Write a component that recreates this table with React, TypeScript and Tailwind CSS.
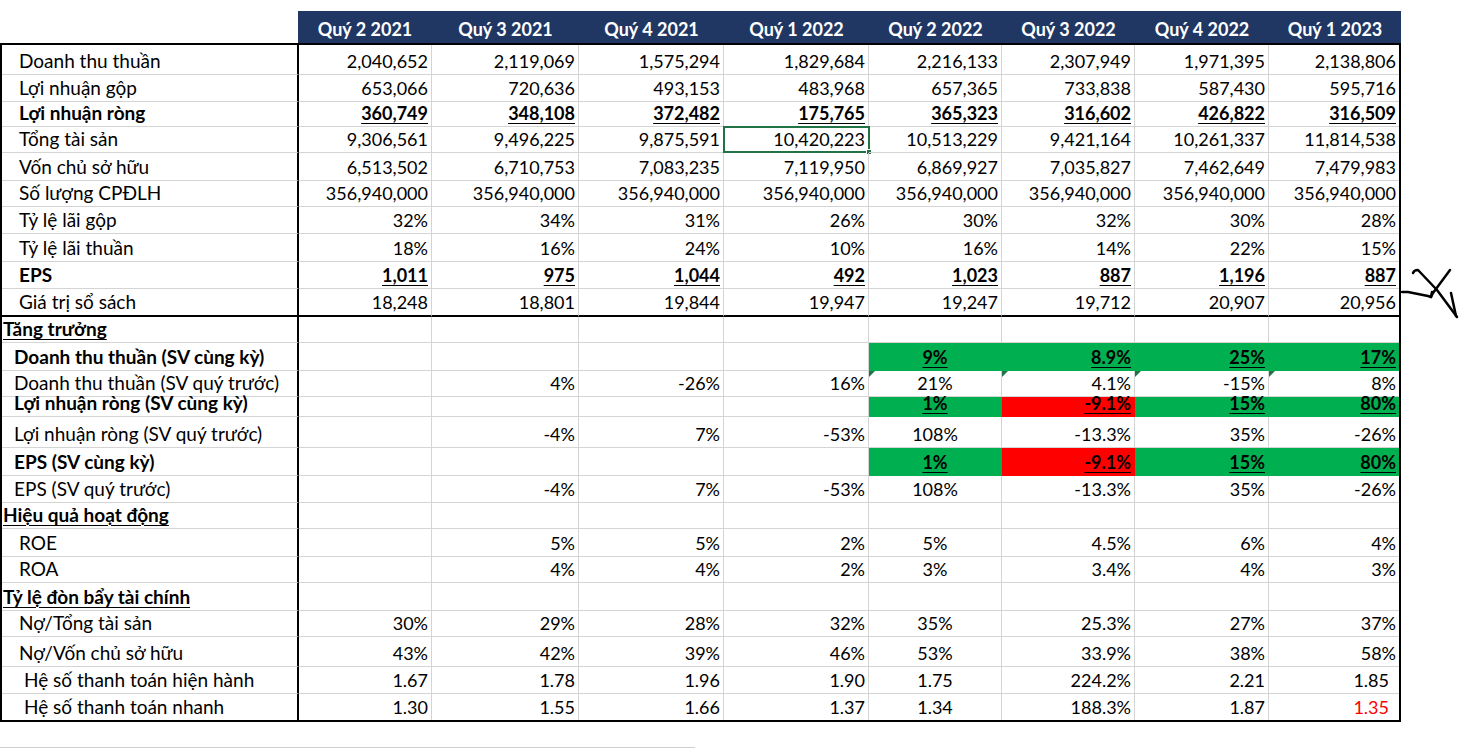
import React from 'react';

type Val = string | null | { v: string; cls: string };
type Row = {
  label: string;
  pad: string;
  h: string;
  bold?: boolean;
  section?: boolean;
  ul?: boolean;
  tight?: boolean;
  vals?: Val[];
  fills?: (string | null)[];
  marks?: boolean;
  edge?: 'thick' | 'last';
};

const quarters = ['Quý 2 2021', 'Quý 3 2021', 'Quý 4 2021', 'Quý 1 2022', 'Quý 2 2022', 'Quý 3 2022', 'Quý 4 2022', 'Quý 1 2023'];
const colW = ['w-[133px]', 'w-[147px]', 'w-[145px]', 'w-[145px]', 'w-[133px]', 'w-[133px]', 'w-[134px]', 'w-[130px]'];
const headW = ['w-[134px]', 'w-[147px]', 'w-[145px]', 'w-[145px]', 'w-[133px]', 'w-[133px]', 'w-[134px]', 'w-[132px]'];

const growthFill = [null, null, null, null, 'g', 'g', 'g', 'g'];
const lossFill = [null, null, null, null, 'g', 'r', 'g', 'g'];

const rows: Row[] = [
  { label: 'Doanh thu thuần', pad: 'pl-[17px]', h: 'h-[30px]', vals: ['2,040,652', '2,119,069', '1,575,294', '1,829,684', '2,216,133', '2,307,949', '1,971,395', '2,138,806'] },
  { label: 'Lợi nhuận gộp', pad: 'pl-[17px]', h: 'h-[27px]', vals: ['653,066', '720,636', '493,153', '483,968', '657,365', '733,838', '587,430', '595,716'] },
  { label: 'Lợi nhuận ròng', pad: 'pl-[17px]', h: 'h-[25px]', bold: true, ul: true, vals: ['360,749', '348,108', '372,482', '175,765', '365,323', '316,602', '426,822', '316,509'] },
  { label: 'Tổng tài sản', pad: 'pl-[17px]', h: 'h-[26px]', vals: ['9,306,561', '9,496,225', '9,875,591', '10,420,223', '10,513,229', '9,421,164', '10,261,337', '11,814,538'] },
  { label: 'Vốn chủ sở hữu', pad: 'pl-[17px]', h: 'h-[28px]', vals: ['6,513,502', '6,710,753', '7,083,235', '7,119,950', '6,869,927', '7,035,827', '7,462,649', '7,479,983'] },
  { label: 'Số lượng CPĐLH', pad: 'pl-[17px]', h: 'h-[26px]', vals: Array(8).fill('356,940,000') },
  { label: 'Tỷ lệ lãi gộp', pad: 'pl-[17px]', h: 'h-[27px]', vals: ['32%', '34%', '31%', '26%', '30%', '32%', '30%', '28%'] },
  { label: 'Tỷ lệ lãi thuần', pad: 'pl-[17px]', h: 'h-[28px]', vals: ['18%', '16%', '24%', '10%', '16%', '14%', '22%', '15%'] },
  { label: 'EPS', pad: 'pl-[17px]', h: 'h-[27px]', bold: true, ul: true, vals: ['1,011', '975', '1,044', '492', '1,023', '887', '1,196', '887'] },
  { label: 'Giá trị sổ sách', pad: 'pl-[17px]', h: 'h-[28px]', edge: 'thick', vals: ['18,248', '18,801', '19,844', '19,947', '19,247', '19,712', '20,907', '20,956'] },
  { label: 'Tăng trưởng', pad: 'pl-[1px]', h: 'h-[26px]', section: true },
  { label: 'Doanh thu thuần (SV cùng kỳ)', pad: 'pl-[12px]', h: 'h-[28px]', bold: true, ul: true, fills: growthFill, vals: [null, null, null, null, '9%', '8.9%', '25%', '17%'] },
  { label: 'Doanh thu thuần (SV quý trước)', pad: 'pl-[12px]', h: 'h-[26px]', marks: true, vals: [null, '4%', '-26%', '16%', '21%', '4.1%', '-15%', '8%'] },
  { label: 'Lợi nhuận ròng (SV cùng kỳ)', pad: 'pl-[12px]', h: 'h-[20px]', bold: true, ul: true, tight: true, fills: lossFill, vals: [null, null, null, null, '1%', '-9.1%', '15%', '80%'] },
  { label: 'Lợi nhuận ròng (SV quý trước)', pad: 'pl-[12px]', h: 'h-[31px]', vals: [null, '-4%', '7%', '-53%', '108%', '-13.3%', '35%', '-26%'] },
  { label: 'EPS (SV cùng kỳ)', pad: 'pl-[12px]', h: 'h-[28px]', bold: true, ul: true, fills: lossFill, vals: [null, null, null, null, '1%', '-9.1%', '15%', '80%'] },
  { label: 'EPS (SV quý trước)', pad: 'pl-[12px]', h: 'h-[27px]', vals: [null, '-4%', '7%', '-53%', '108%', '-13.3%', '35%', '-26%'] },
  { label: 'Hiệu quả hoạt động', pad: 'pl-[1px]', h: 'h-[26px]', section: true },
  { label: 'ROE', pad: 'pl-[17px]', h: 'h-[28px]', vals: [null, '5%', '5%', '2%', '5%', '4.5%', '6%', '4%'] },
  { label: 'ROA', pad: 'pl-[17px]', h: 'h-[26px]', vals: [null, '4%', '4%', '2%', '3%', '3.4%', '4%', '3%'] },
  { label: 'Tỷ lệ đòn bẩy tài chính', pad: 'pl-[1px]', h: 'h-[28px]', section: true },
  { label: 'Nợ/Tổng tài sản', pad: 'pl-[17px]', h: 'h-[26px]', vals: ['30%', '29%', '28%', '32%', '35%', '25.3%', '27%', '37%'] },
  { label: 'Nợ/Vốn chủ sở hữu', pad: 'pl-[17px]', h: 'h-[30px]', vals: ['43%', '42%', '39%', '46%', '53%', '33.9%', '38%', '58%'] },
  { label: 'Hệ số thanh toán hiện hành', pad: 'pl-[22px]', h: 'h-[27px]', vals: ['1.67', '1.78', '1.96', '1.90', '1.75', '224.2%', '2.21', { v: '1.85', cls: 'pr-[10px]' }] },
  { label: 'Hệ số thanh toán nhanh', pad: 'pl-[22px]', h: 'h-[26px]', edge: 'last', vals: ['1.30', '1.55', '1.66', '1.37', '1.34', '188.3%', '1.87', { v: '1.35', cls: 'pr-[10px] text-[#ff0000]' }] },
];

const bottomBorder = (edge: Row['edge'], fill: string | null | undefined) => {
  if (edge === 'last') return '';
  if (edge === 'thick') return 'border-b-2 border-b-black';
  if (fill === 'g') return 'border-b border-b-[#00b050]';
  if (fill === 'r') return 'border-b border-b-[#ff0000]';
  return 'border-b border-b-[#d4d4d4]';
};

const rightBorder = (i: number, fill: string | null | undefined) => {
  if (i === 7) return '';
  if (fill === 'g') return 'border-r border-r-[#00b050]';
  if (fill === 'r') return 'border-r border-r-[#ff0000]';
  return 'border-r border-r-[#d4d4d4]';
};

const SheetRow = ({ row, idx }: { row: Row; idx: number }) => {
  const growth = idx >= 10;
  // short rows keep the same baseline with a tighter line box
  const fit = row.tight ? 'leading-[12px] pb-[7px]' : 'pb-[2px]';
  return (
    <div className={`flex ${row.h}`}>
      <div className={`w-[297px] shrink-0 flex items-end text-[19px] border-r-2 border-r-black whitespace-nowrap ${fit} ${row.pad} ${bottomBorder(row.edge, null)}`}>
        <span className={`${row.bold || row.section ? 'font-bold' : ''} ${row.section ? 'underline decoration-1 underline-offset-[3px]' : ''}`}>
          {row.label}
        </span>
      </div>
      {colW.map((w, i) => {
        const fill = row.fills?.[i];
        const raw = row.vals?.[i] ?? null;
        const text = raw && typeof raw === 'object' ? raw.v : raw;
        const extra = raw && typeof raw === 'object' ? raw.cls : '';
        const align = growth && i === 4 ? 'justify-center' : 'justify-end';
        const bg = fill === 'g' ? 'bg-[#00b050]' : fill === 'r' ? 'bg-[#ff0000]' : '';
        const selected = idx === 3 && i === 3;
        return (
          <div
            key={i}
            className={`${w} shrink-0 relative flex items-end px-[3px] whitespace-nowrap ${fit} ${align} ${bg} ${rightBorder(i, fill)} ${bottomBorder(row.edge, fill)} ${extra}`}
          >
            {row.marks && i >= 4 && (
              <div className="absolute left-0 top-0 w-0 h-0 border-t-[6px] border-r-[6px] border-t-[#217346] border-r-transparent" />
            )}
            {text && (
              <span className={row.ul ? 'font-bold underline decoration-1 underline-offset-[3px]' : ''}>{text}</span>
            )}
            {selected && (
              <>
                <div className="absolute -left-[1px] -top-[1px] -right-[2px] -bottom-[1px] border-2 border-[#217346]" />
                <div className="absolute -right-[4px] -bottom-[3px] w-[6px] h-[6px] bg-[#217346] border border-white" />
              </>
            )}
          </div>
        );
      })}
    </div>
  );
};

export default function App() {
  return (
    <div className="relative w-[1460px] h-[748px] overflow-hidden bg-white text-black font-[Lato,sans-serif] text-[18px] leading-[22px]">
      {/* Header band */}
      <div className="flex mt-[11px] h-[32px]">
        <div className="w-[298px] shrink-0" />
        <div className="flex bg-[#203764]">
          {quarters.map((q, i) => (
            <div key={q} className={`${headW[i]} flex items-center justify-center pt-[3px] text-white font-bold`}>
              {q}
            </div>
          ))}
        </div>
      </div>

      {/* Sheet body */}
      <div className="w-[1401px] border-2 border-black">
        {rows.map((r, i) => (
          <SheetRow key={r.label + i} row={r} idx={i} />
        ))}
      </div>

      <div className="mt-[25px] h-px w-[695px] bg-[#cfcfcf]" />

      {/* hand-drawn mark */}
      <svg className="absolute left-[1401px] top-[262px]" width="59" height="60" viewBox="0 0 59 60" fill="none" stroke="#000" strokeWidth="2.5" strokeLinecap="round" strokeLinejoin="round">
        <path d="M1 30 L7 30 L27 34 L30 35 L31 30" />
        <path d="M12 11 Q13 8 17 8 L36 28 L56 55" />
        <path d="M49 8 L32 31 L30 35" />
        <path d="M50 31 L55 54" />
      </svg>
    </div>
  );
}
